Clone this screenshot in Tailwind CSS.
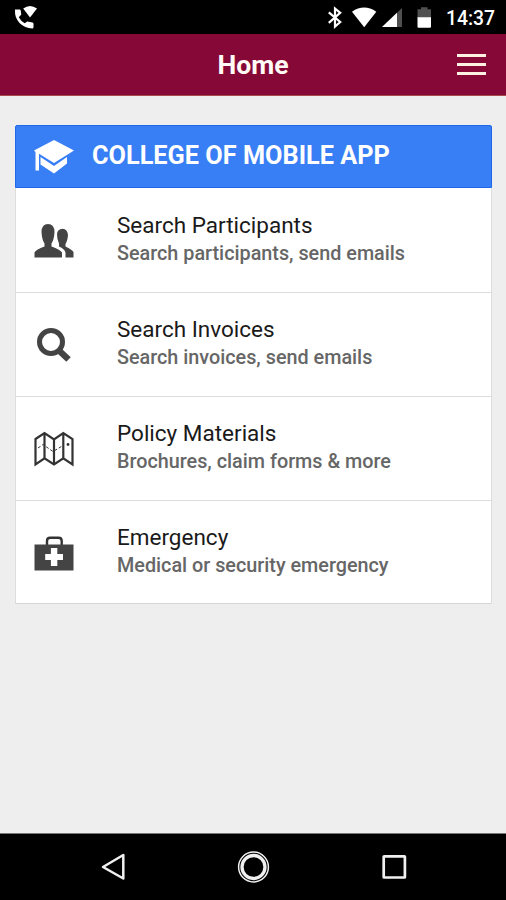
<!DOCTYPE html>
<html lang="en">
<head>
<meta charset="utf-8">
<title>Home</title>
<script src="https://cdn.jsdelivr.net/npm/@tailwindcss/browser@4"></script>
</head>
<body class="w-[506px] h-[900px] overflow-hidden flex flex-col bg-[#eeeeee] font-['Roboto',sans-serif]">
  <div class="h-[34px] shrink-0 bg-black flex items-center text-white">
    <svg class="w-[506px] h-[34px]" viewBox="0 0 506 34" fill="#fff">
      <path d="M15 10.3Q14.400 9.600 15.400 9.500H19.600Q20.600 9.600 20.700 10.600L21.300 14.500L18.800 17.200Q21 21.200 24.700 23.300L27.300 21.500L32.500 22.600Q33.500 22.900 33.500 24V27.300Q33.500 28.300 32.500 28.400Q25 28.500 19.500 23Q14.500 17.500 15 10.300Z"/>
      <path d="M23.200 8.500Q30 3.500 37 8.500L30 17.500Z"/>
      <path d="M328.800 12.300L340.200 22L335 26.500V8.500L340.200 12.800L328.800 22.800" fill="none" stroke="#fff" stroke-width="2.200"/>
      <path d="M352 11.700Q364 3.300 376.300 11.700L364.200 27.200Z"/>
      <path d="M402 8V27H382Z" fill="#505050"/>
      <path d="M397 12.700V27H382Z"/>
      <path d="M417.500 9.300H421V7.300H427.500V9.300H431V18H417.500Z" fill="#505050"/>
      <path d="M417.500 17.300H431V26.500Q431 27.700 430 27.700H418.500Q417.500 27.700 417.500 26.500Z"/>
      <text x="446" y="25" font-size="20" font-weight="500" textLength="49" lengthAdjust="spacingAndGlyphs">14:37</text>
    </svg>
  </div>
  <header class="h-[62px] shrink-0 bg-[#850837] border-b border-[#a64b4b] grid grid-cols-[1fr_auto_1fr] items-center text-white">
    <span></span>
    <h1 class="text-[26.600px] leading-[30px] font-bold text-[#fffaf5]">Home</h1>
    <div class="justify-self-end mr-5 flex flex-col gap-[6px]">
      <span class="w-[29px] h-[3px] bg-[#fff1e2]"></span>
      <span class="w-[29px] h-[3px] bg-[#fff1e2]"></span>
      <span class="w-[29px] h-[3px] bg-[#fff1e2]"></span>
    </div>
  </header>
  <main class="flex-1 pt-[29px] pl-[15px] pr-[13px]">
    <section class="w-[477px]">
      <div class="h-[63px] bg-[#387ef5] border border-[#2068ea] rounded-t-[2px] flex items-center text-white">
        <svg class="w-[42px] h-[36px] ml-[18px] mr-[16px]" viewBox="0 0 42 36" fill="#fff">
          <path d="M0 11.500L20 1L40 11.500L20 24L5 14.800V31.500H1.500V13Z"/>
          <path d="M6.500 18L20 27L33 18V24.500L20 34.500L6.500 25.500Z"/>
        </svg>
        <h2 class="text-[25.300px] leading-[30px] font-bold whitespace-nowrap pb-[2px]">COLLEGE OF MOBILE APP</h2>
      </div>
      <div class="border-x border-[#dddddd] bg-white">
        <div class="h-[105px] border-b border-[#dddddd] flex">
          <svg class="w-[42px] h-[42px] ml-[17px] mr-[42px] mt-[32px]" viewBox="0 0 42 42" fill="#444">
            <path d="M1.500 37.500V32.500Q3 29.500 11.500 26.500V23.500Q9 20 8.500 12Q8.700 4 15 4Q21.300 4 21.500 12Q21 20 18.500 23.500V26.500Q27 29.500 29 32.500V37.500Z"/>
            <path d="M24 14Q24.500 9 29.500 8.700Q34.500 9 35 15Q34.500 21 32.500 24V26.500Q39 29.500 40.500 32V37.500H32.500V32.500Q31.500 29 26 26.500V23.500Q24 19.500 24 14Z"/>
          </svg>
          <div class="mt-[23px] whitespace-nowrap">
            <p class="text-[22.500px] leading-[28px] text-[#1a1a1a]">Search Participants</p>
            <p class="text-[19.800px] leading-[30px] font-medium text-[#666]">Search participants, send emails</p>
          </div>
        </div>
        <div class="h-[104px] border-b border-[#dddddd] flex">
          <svg class="w-[42px] h-[42px] ml-[17px] mr-[42px] mt-[32px]" viewBox="0 0 42 42" fill="none" stroke="#444">
            <circle cx="18" cy="17" r="11.500" stroke-width="5"/>
            <path d="M26 25.500L35.500 34.500" stroke-width="6.500"/>
          </svg>
          <div class="mt-[22px] whitespace-nowrap">
            <p class="text-[22.500px] leading-[28px] text-[#1a1a1a]">Search Invoices</p>
            <p class="text-[19.800px] leading-[30px] font-medium text-[#666]">Search invoices, send emails</p>
          </div>
        </div>
        <div class="h-[104px] border-b border-[#dddddd] flex">
          <svg class="w-[42px] h-[42px] ml-[17px] mr-[42px] mt-[31px]" viewBox="0 0 42 42" fill="none" stroke="#333" stroke-width="2.200">
            <path d="M2.500 11L11.500 5L21 11.500L30.300 5L39.500 11V36.500L30.300 30.300L21 36.500L11.500 30.300L2.500 36.500ZM11.500 5V30.300M21 11.500V36.500M30.300 5V30.300"/>
            <path d="M5 20L10 16.500L20 23.500L31 17" stroke-width="1" stroke-dasharray="3 2"/>
            <circle cx="35" cy="16.500" r="1.400" fill="#333" stroke="none"/>
          </svg>
          <div class="mt-[22px] whitespace-nowrap">
            <p class="text-[22.500px] leading-[28px] text-[#1a1a1a]">Policy Materials</p>
            <p class="text-[19.800px] leading-[30px] font-medium text-[#666]">Brochures, claim forms &amp; more</p>
          </div>
        </div>
        <div class="h-[103px] border-b border-[#d6d6d6] flex">
          <svg class="w-[42px] h-[42px] ml-[17px] mr-[42px] mt-[32px]" viewBox="0 0 42 42">
            <path d="M14 12V8Q14 4.800 17.200 4.800H25.500Q28.700 4.800 28.700 8V12" fill="none" stroke="#333" stroke-width="2.400"/>
            <path d="M1.500 11.500H40.500V37.500H1.500Z" fill="#444"/>
            <path d="M17.900 15H24.300V21H30V27H24.300V33H17.900V27H12.200V21H17.900Z" fill="#fff"/>
          </svg>
          <div class="mt-[22px] whitespace-nowrap">
            <p class="text-[22.500px] leading-[28px] text-[#1a1a1a]">Emergency</p>
            <p class="text-[19.800px] leading-[30px] font-medium text-[#666]">Medical or security emergency</p>
          </div>
        </div>
      </div>
    </section>
  </main>
  <nav class="h-[67px] shrink-0 bg-black border-t border-[#777]">
    <svg class="w-[506px] h-[66px]" viewBox="0 834 506 66" fill="none" stroke="#f0f0f0">
      <path d="M103 867L123.300 855V878.500Z" stroke-width="2.500" stroke-linejoin="round"/>
      <circle cx="253.500" cy="867" r="11.500" stroke-width="3.300"/>
      <circle cx="253.500" cy="867" r="14.900" stroke-width="1.500"/>
      <rect x="383.700" y="856.300" width="21.200" height="21.200" rx="0.500" stroke-width="2.700"/>
    </svg>
  </nav>
</body>
</html>
